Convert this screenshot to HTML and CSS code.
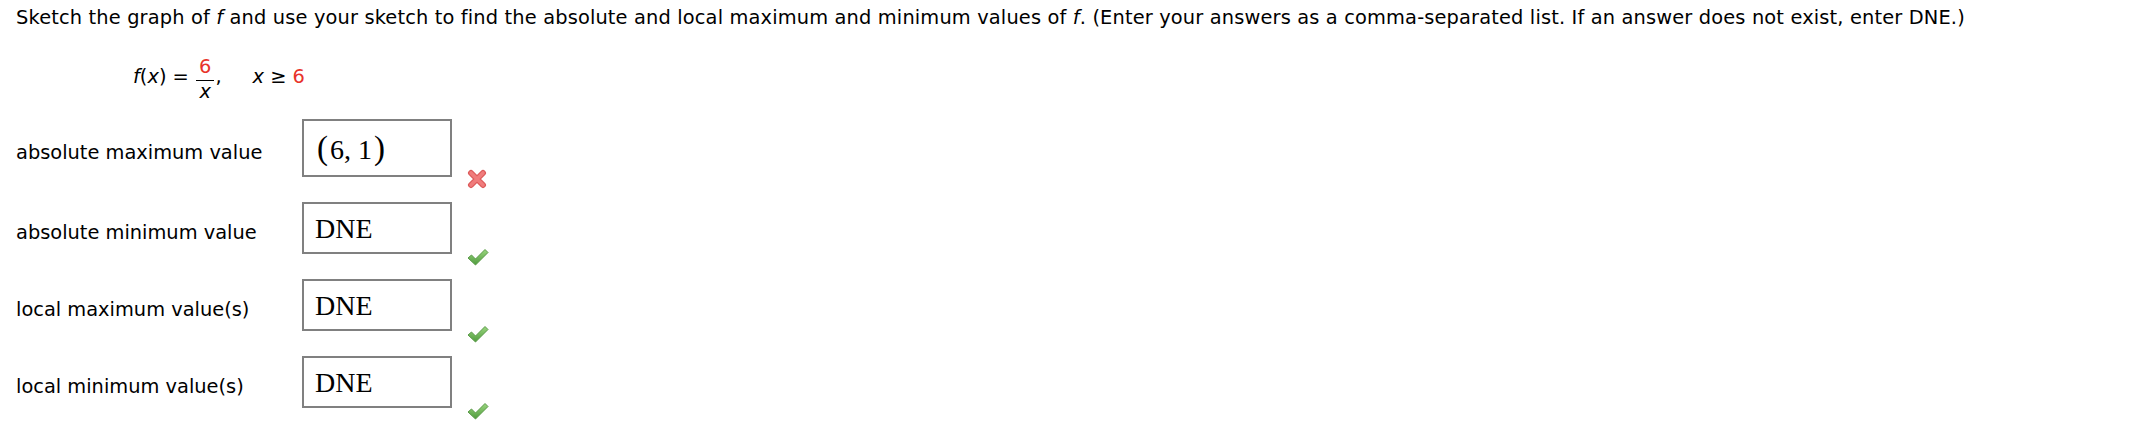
FILE: index.html
```html
<!DOCTYPE html>
<html lang="en">
<head>
  <meta charset="UTF-8">
  <meta name="viewport" content="width=device-width, initial-scale=1.0">
  <title>Absolute and Local Extrema</title>
  <link rel="stylesheet" href="styles.css">
</head>
<body>
  <div class="question">
    <!-- Prompt -->
    <p class="prompt">Sketch the graph of <i>f</i> and use your sketch to find the absolute and local maximum and minimum values of <i>f</i>. (Enter your answers as a comma-separated list. If an answer does not exist, enter DNE.)</p>

    <!-- Function -->
    <div class="formula">
      <i>f</i>(<i>x</i>) = <span class="frac"><span class="num red">6</span><span class="den"><i>x</i></span></span>,<span class="gap"></span><i>x</i> &ge; <span class="red">6</span>
    </div>

    <!-- Answers -->
    <div class="answers">
      <div class="answer-row">
        <span class="label">absolute maximum value</span>
        <div class="answer-box tall"><span class="paren">(</span>6, 1<span class="paren">)</span></div>
        <span class="mark">
          <svg width="20" height="20" viewBox="0 0 20 20">
            <path d="M4 4 L16 16 M16 4 L4 16" stroke="#dc5a5a" stroke-width="6" stroke-linecap="round" fill="none"/>
            <path d="M4 4 L16 16 M16 4 L4 16" stroke="#f07c7c" stroke-width="3.6" stroke-linecap="round" fill="none"/>
          </svg>
        </span>
      </div>

      <div class="answer-row">
        <span class="label">absolute minimum value</span>
        <div class="answer-box">DNE</div>
        <span class="mark">
          <svg width="22" height="18" viewBox="0 0 22 18">
            <defs>
              <linearGradient id="ok1" x1="0" y1="0" x2="0" y2="1">
                <stop offset="0" stop-color="#9ad67e"/>
                <stop offset="1" stop-color="#4f9b3d"/>
              </linearGradient>
            </defs>
            <path d="M1 10 L4.5 7 L8.5 11 L18 1.5 L21 4.5 L8.5 17 Z" fill="url(#ok1)" stroke="#5a9a48" stroke-width="1" stroke-linejoin="round"/>
          </svg>
        </span>
      </div>

      <div class="answer-row">
        <span class="label">local maximum value(s)</span>
        <div class="answer-box">DNE</div>
        <span class="mark">
          <svg width="22" height="18" viewBox="0 0 22 18">
            <path d="M1 10 L4.5 7 L8.5 11 L18 1.5 L21 4.5 L8.5 17 Z" fill="url(#ok1)" stroke="#5a9a48" stroke-width="1" stroke-linejoin="round"/>
          </svg>
        </span>
      </div>

      <div class="answer-row">
        <span class="label">local minimum value(s)</span>
        <div class="answer-box">DNE</div>
        <span class="mark">
          <svg width="22" height="18" viewBox="0 0 22 18">
            <path d="M1 10 L4.5 7 L8.5 11 L18 1.5 L21 4.5 L8.5 17 Z" fill="url(#ok1)" stroke="#5a9a48" stroke-width="1" stroke-linejoin="round"/>
          </svg>
        </span>
      </div>
    </div>
  </div>
</body>
</html>
```

FILE: styles.css
```css
/* Global Styles */
* {
  margin: 0;
  padding: 0;
  box-sizing: border-box;
}

body {
  font-family: 'DejaVu Sans', Verdana, sans-serif;
  font-size: 19.4px;
  color: #000000;
  background: #ffffff;
}

.question {
  padding: 6px 16px 24px 16px;
}

.red {
  color: #e8332a;
}

/* Prompt */
.prompt {
  white-space: nowrap;
  letter-spacing: 0.15px;
}

/* Function line */
.formula {
  margin-top: 30px;
  padding-left: 117px;
}

.frac {
  display: inline-flex;
  flex-direction: column;
  align-items: center;
  vertical-align: 10px;
  margin: 0 1px;
}

.frac .num {
  line-height: 16px;
  padding: 0 3px 5px 3px;
  border-bottom: 1px solid #000000;
}

.frac .den {
  line-height: 22px;
}

.gap {
  display: inline-block;
  width: 31px;
}

/* Answer rows */
.answers {
  margin-top: 16px;
  display: flex;
  flex-direction: column;
  gap: 25px;
}

.answer-row {
  display: flex;
  align-items: center;
}

.label {
  width: 286px;
  padding-top: 9px;
}

.answer-box {
  width: 150px;
  border: 2px solid #808080;
  padding: 2px 11px 0 11px;
  font-family: 'Liberation Serif', 'Times New Roman', serif;
  font-size: 28px;
  line-height: 46px;
}

.answer-box.tall {
  line-height: 51px;
}

.answer-box .paren {
  font-size: 33px;
  margin: 0 2px;
}

.mark {
  display: flex;
  align-self: flex-end;
  margin-left: 15px;
  margin-bottom: -12px;
}
```
